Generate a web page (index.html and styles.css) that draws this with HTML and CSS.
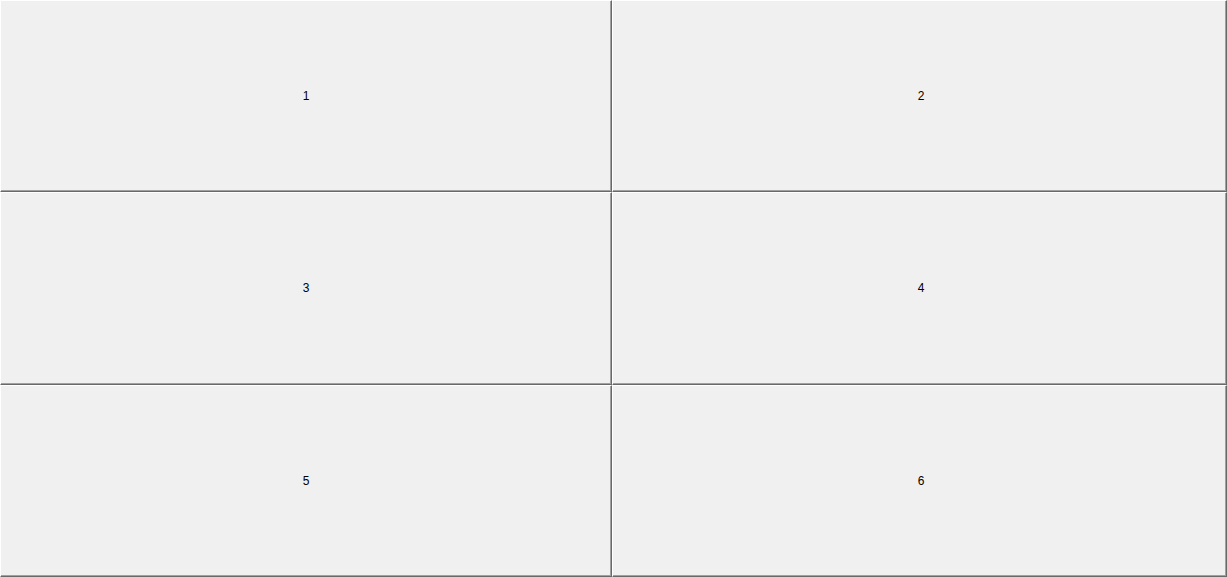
FILE: index.html
```html
<!DOCTYPE html>
<html>
<head>
<meta charset="utf-8">
<link rel="stylesheet" href="styles.css">
</head>
<body>
<div class="grid">
  <div class="cell">1</div>
  <div class="cell">2</div>
  <div class="cell">3</div>
  <div class="cell">4</div>
  <div class="cell">5</div>
  <div class="cell">6</div>
</div>
</body>
</html>
```
FILE: styles.css
```css
html, body {
  margin: 0;
  padding: 0;
  height: 100%;
  background: #f0f0f0;
}
.grid {
  display: grid;
  grid-template-columns: 612px 1fr;
  grid-template-rows: 1fr 1fr 1fr;
  height: 100vh;
}
.cell {
  display: flex;
  align-items: center;
  justify-content: center;
  background: #f0f0f0;
  border-top: 1px solid #ffffff;
  border-left: 1px solid #ffffff;
  border-right: 1px solid #696969;
  border-bottom: 1px solid #696969;
  box-shadow: inset -1px -1px 0 #a0a0a0;
  font-family: "Liberation Sans", Arial, sans-serif;
  font-size: 12px;
  color: #000;
}
.cell:nth-child(even) {
  padding-left: 3px;
}
```
